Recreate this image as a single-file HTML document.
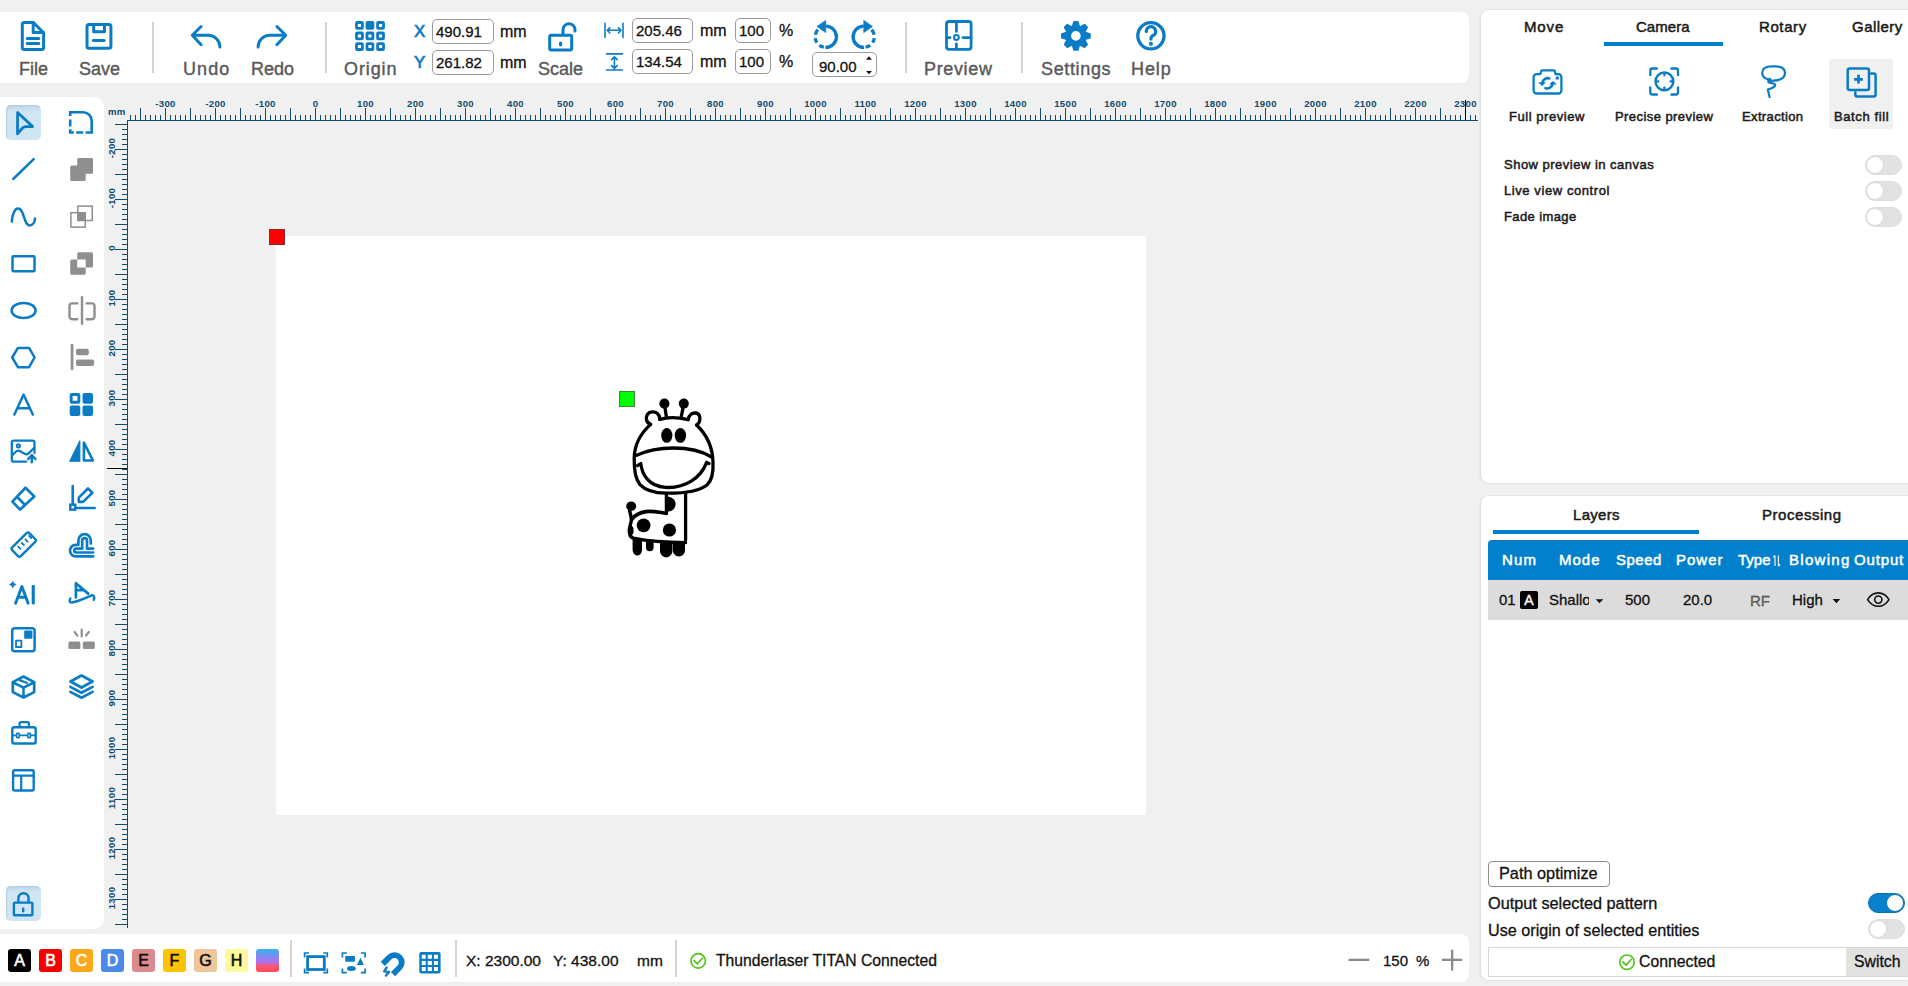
<!DOCTYPE html>
<html><head><meta charset="utf-8">
<style>
*{box-sizing:border-box;margin:0;padding:0}
html,body{width:1908px;height:986px;overflow:hidden;background:#f0f0f0;font-family:"Liberation Sans",sans-serif;position:relative}
.abs{position:absolute}
.panel{position:absolute;background:#fff}
.tb-label{position:absolute;top:60.4px;font-size:18px;color:#58585a;white-space:nowrap;line-height:1;-webkit-text-stroke:0.4px #58585a}
.sep{position:absolute;width:2px;background:#d4d4d4}
.inp{position:absolute;border:1px solid #9a9a9a;border-radius:5px;background:#fff;font-size:15px;color:#111;line-height:1;-webkit-text-stroke:0.3px #111}
.inp span{position:absolute}
.unit{position:absolute;font-size:16px;color:#111;line-height:1;-webkit-text-stroke:0.3px #111}
svg{position:absolute;overflow:visible}
.blue{fill:none;stroke:#0a7cc4}
.t13{position:absolute;font-size:13px;color:#1a1a1a;white-space:nowrap;line-height:1;-webkit-text-stroke:0.5px #1a1a1a}
.tab{position:absolute;font-size:15px;color:#1a1a1a;white-space:nowrap;line-height:1;-webkit-text-stroke:0.5px #1a1a1a}
.tog{position:absolute;width:37px;height:20px;border-radius:10px;background:#e2e2e2;border:1px solid #dedede}
.tog:after{content:"";position:absolute;left:0px;top:0px;width:18px;height:18px;box-sizing:border-box;border-radius:50%;background:#fff;border:1px solid #dadada}
.tog.on{background:#0880cc;border-color:#0a74b8}
.tog.on:after{left:auto;right:0;border-color:#0a74b8}
.hdr{position:absolute;font-size:15px;color:#fff;white-space:nowrap;line-height:1;-webkit-text-stroke:0.5px #fff}
.cell{position:absolute;font-size:15px;color:#111;white-space:nowrap;line-height:1;-webkit-text-stroke:0.3px #111}
.sw{position:absolute;top:949px;width:23px;height:23px;border-radius:3px;font-size:16px;text-align:center;line-height:24px;-webkit-text-stroke:0.6px currentColor}
</style></head><body>

<!-- top toolbar -->
<div class="panel" style="left:0;top:12px;width:1469px;height:71px;border-radius:0 8px 8px 0"></div>
<!-- left toolbar -->
<div class="panel" style="left:0;top:97px;width:104px;height:832px;border-radius:0 10px 10px 0"></div>
<div class="abs" style="left:6px;top:105px;width:35px;height:35px;border-radius:5px;background:linear-gradient(#bcd6e8,#d0e6f4 20%,#cfe5f3);box-shadow:inset 1px 1px 1px #b5ccdc"></div>
<div class="abs" style="left:6px;top:886px;width:35px;height:35px;border-radius:5px;background:linear-gradient(#bcd6e8,#d0e6f4 20%,#cfe5f3);box-shadow:inset 1px 1px 1px #b5ccdc"></div>
<!-- workspace -->
<div class="abs" style="left:276px;top:236px;width:870px;height:579px;background:#fff"></div>
<div class="abs" style="left:1478.5px;top:17px;width:3px;height:459px;background:#e7e7e7;border-radius:2px"></div>
<div class="abs" style="left:1478.5px;top:503px;width:3px;height:470px;background:#e7e7e7;border-radius:2px"></div>
<!-- right panel 1 -->
<div class="panel" style="left:1481px;top:10px;width:427px;height:473px;border-radius:8px 0 0 8px;box-shadow:-1px 0 1px #dedede,0 1px 2px #e2e2e2,0 -1px 1px #e6e6e6"></div>
<!-- right panel 2 -->
<div class="panel" style="left:1481px;top:496px;width:427px;height:484px;border-radius:8px 0 0 8px;box-shadow:-1px 0 1px #dedede,0 1px 2px #e2e2e2,0 -1px 1px #e6e6e6"></div>
<!-- bottom bar -->
<div class="panel" style="left:0;top:934px;width:1469px;height:48px;border-radius:0 8px 8px 0"></div>

<svg class="ruler" width="1908" height="986" style="position:absolute;left:0;top:0">
<path fill="#0f4b6d" d="M128 120h1350v1h-1350zM130 115h1v5h-1zM135 115h1v5h-1zM140 108h1v12h-1zM145 115h1v5h-1zM150 115h1v5h-1zM155 115h1v5h-1zM160 115h1v5h-1zM165 108h1v12h-1zM170 115h1v5h-1zM175 115h1v5h-1zM180 115h1v5h-1zM185 115h1v5h-1zM190 108h1v12h-1zM195 115h1v5h-1zM200 115h1v5h-1zM205 115h1v5h-1zM210 115h1v5h-1zM215 108h1v12h-1zM220 115h1v5h-1zM225 115h1v5h-1zM230 115h1v5h-1zM235 115h1v5h-1zM240 108h1v12h-1zM245 115h1v5h-1zM250 115h1v5h-1zM255 115h1v5h-1zM260 115h1v5h-1zM265 108h1v12h-1zM270 115h1v5h-1zM275 115h1v5h-1zM280 115h1v5h-1zM285 115h1v5h-1zM290 108h1v12h-1zM295 115h1v5h-1zM300 115h1v5h-1zM305 115h1v5h-1zM310 115h1v5h-1zM315 108h1v12h-1zM320 115h1v5h-1zM325 115h1v5h-1zM330 115h1v5h-1zM335 115h1v5h-1zM340 108h1v12h-1zM345 115h1v5h-1zM350 115h1v5h-1zM355 115h1v5h-1zM360 115h1v5h-1zM365 108h1v12h-1zM370 115h1v5h-1zM375 115h1v5h-1zM380 115h1v5h-1zM385 115h1v5h-1zM390 108h1v12h-1zM395 115h1v5h-1zM400 115h1v5h-1zM405 115h1v5h-1zM410 115h1v5h-1zM415 108h1v12h-1zM420 115h1v5h-1zM425 115h1v5h-1zM430 115h1v5h-1zM435 115h1v5h-1zM440 108h1v12h-1zM445 115h1v5h-1zM450 115h1v5h-1zM455 115h1v5h-1zM460 115h1v5h-1zM465 108h1v12h-1zM470 115h1v5h-1zM475 115h1v5h-1zM480 115h1v5h-1zM485 115h1v5h-1zM490 108h1v12h-1zM495 115h1v5h-1zM500 115h1v5h-1zM505 115h1v5h-1zM510 115h1v5h-1zM515 108h1v12h-1zM520 115h1v5h-1zM525 115h1v5h-1zM530 115h1v5h-1zM535 115h1v5h-1zM540 108h1v12h-1zM545 115h1v5h-1zM550 115h1v5h-1zM555 115h1v5h-1zM560 115h1v5h-1zM565 108h1v12h-1zM570 115h1v5h-1zM575 115h1v5h-1zM580 115h1v5h-1zM585 115h1v5h-1zM590 108h1v12h-1zM595 115h1v5h-1zM600 115h1v5h-1zM605 115h1v5h-1zM610 115h1v5h-1zM615 108h1v12h-1zM620 115h1v5h-1zM625 115h1v5h-1zM630 115h1v5h-1zM635 115h1v5h-1zM640 108h1v12h-1zM645 115h1v5h-1zM650 115h1v5h-1zM655 115h1v5h-1zM660 115h1v5h-1zM665 108h1v12h-1zM670 115h1v5h-1zM675 115h1v5h-1zM680 115h1v5h-1zM685 115h1v5h-1zM690 108h1v12h-1zM695 115h1v5h-1zM700 115h1v5h-1zM705 115h1v5h-1zM710 115h1v5h-1zM715 108h1v12h-1zM720 115h1v5h-1zM725 115h1v5h-1zM730 115h1v5h-1zM735 115h1v5h-1zM740 108h1v12h-1zM745 115h1v5h-1zM750 115h1v5h-1zM755 115h1v5h-1zM760 115h1v5h-1zM765 108h1v12h-1zM770 115h1v5h-1zM775 115h1v5h-1zM780 115h1v5h-1zM785 115h1v5h-1zM790 108h1v12h-1zM795 115h1v5h-1zM800 115h1v5h-1zM805 115h1v5h-1zM810 115h1v5h-1zM815 108h1v12h-1zM820 115h1v5h-1zM825 115h1v5h-1zM830 115h1v5h-1zM835 115h1v5h-1zM840 108h1v12h-1zM845 115h1v5h-1zM850 115h1v5h-1zM855 115h1v5h-1zM860 115h1v5h-1zM865 108h1v12h-1zM870 115h1v5h-1zM875 115h1v5h-1zM880 115h1v5h-1zM885 115h1v5h-1zM890 108h1v12h-1zM895 115h1v5h-1zM900 115h1v5h-1zM905 115h1v5h-1zM910 115h1v5h-1zM915 108h1v12h-1zM920 115h1v5h-1zM925 115h1v5h-1zM930 115h1v5h-1zM935 115h1v5h-1zM940 108h1v12h-1zM945 115h1v5h-1zM950 115h1v5h-1zM955 115h1v5h-1zM960 115h1v5h-1zM965 108h1v12h-1zM970 115h1v5h-1zM975 115h1v5h-1zM980 115h1v5h-1zM985 115h1v5h-1zM990 108h1v12h-1zM995 115h1v5h-1zM1000 115h1v5h-1zM1005 115h1v5h-1zM1010 115h1v5h-1zM1015 108h1v12h-1zM1020 115h1v5h-1zM1025 115h1v5h-1zM1030 115h1v5h-1zM1035 115h1v5h-1zM1040 108h1v12h-1zM1045 115h1v5h-1zM1050 115h1v5h-1zM1055 115h1v5h-1zM1060 115h1v5h-1zM1065 108h1v12h-1zM1070 115h1v5h-1zM1075 115h1v5h-1zM1080 115h1v5h-1zM1085 115h1v5h-1zM1090 108h1v12h-1zM1095 115h1v5h-1zM1100 115h1v5h-1zM1105 115h1v5h-1zM1110 115h1v5h-1zM1115 108h1v12h-1zM1120 115h1v5h-1zM1125 115h1v5h-1zM1130 115h1v5h-1zM1135 115h1v5h-1zM1140 108h1v12h-1zM1145 115h1v5h-1zM1150 115h1v5h-1zM1155 115h1v5h-1zM1160 115h1v5h-1zM1165 108h1v12h-1zM1170 115h1v5h-1zM1175 115h1v5h-1zM1180 115h1v5h-1zM1185 115h1v5h-1zM1190 108h1v12h-1zM1195 115h1v5h-1zM1200 115h1v5h-1zM1205 115h1v5h-1zM1210 115h1v5h-1zM1215 108h1v12h-1zM1220 115h1v5h-1zM1225 115h1v5h-1zM1230 115h1v5h-1zM1235 115h1v5h-1zM1240 108h1v12h-1zM1245 115h1v5h-1zM1250 115h1v5h-1zM1255 115h1v5h-1zM1260 115h1v5h-1zM1265 108h1v12h-1zM1270 115h1v5h-1zM1275 115h1v5h-1zM1280 115h1v5h-1zM1285 115h1v5h-1zM1290 108h1v12h-1zM1295 115h1v5h-1zM1300 115h1v5h-1zM1305 115h1v5h-1zM1310 115h1v5h-1zM1315 108h1v12h-1zM1320 115h1v5h-1zM1325 115h1v5h-1zM1330 115h1v5h-1zM1335 115h1v5h-1zM1340 108h1v12h-1zM1345 115h1v5h-1zM1350 115h1v5h-1zM1355 115h1v5h-1zM1360 115h1v5h-1zM1365 108h1v12h-1zM1370 115h1v5h-1zM1375 115h1v5h-1zM1380 115h1v5h-1zM1385 115h1v5h-1zM1390 108h1v12h-1zM1395 115h1v5h-1zM1400 115h1v5h-1zM1405 115h1v5h-1zM1410 115h1v5h-1zM1415 108h1v12h-1zM1420 115h1v5h-1zM1425 115h1v5h-1zM1430 115h1v5h-1zM1435 115h1v5h-1zM1440 108h1v12h-1zM1445 115h1v5h-1zM1450 115h1v5h-1zM1455 115h1v5h-1zM1460 115h1v5h-1zM1465 108h1v12h-1zM1470 115h1v5h-1zM1475 115h1v5h-1zM127 120h1v808h-1zM115 124h12v1h-12zM122 129h5v1h-5zM122 134h5v1h-5zM122 139h5v1h-5zM122 144h5v1h-5zM115 149h12v1h-12zM122 154h5v1h-5zM122 159h5v1h-5zM122 164h5v1h-5zM122 169h5v1h-5zM115 174h12v1h-12zM122 179h5v1h-5zM122 184h5v1h-5zM122 189h5v1h-5zM122 194h5v1h-5zM115 199h12v1h-12zM122 204h5v1h-5zM122 209h5v1h-5zM122 214h5v1h-5zM122 219h5v1h-5zM115 224h12v1h-12zM122 229h5v1h-5zM122 234h5v1h-5zM122 239h5v1h-5zM122 244h5v1h-5zM115 249h12v1h-12zM122 254h5v1h-5zM122 259h5v1h-5zM122 264h5v1h-5zM122 269h5v1h-5zM115 274h12v1h-12zM122 279h5v1h-5zM122 284h5v1h-5zM122 289h5v1h-5zM122 294h5v1h-5zM115 299h12v1h-12zM122 304h5v1h-5zM122 309h5v1h-5zM122 314h5v1h-5zM122 319h5v1h-5zM115 324h12v1h-12zM122 329h5v1h-5zM122 334h5v1h-5zM122 339h5v1h-5zM122 344h5v1h-5zM115 349h12v1h-12zM122 354h5v1h-5zM122 359h5v1h-5zM122 364h5v1h-5zM122 369h5v1h-5zM115 374h12v1h-12zM122 379h5v1h-5zM122 384h5v1h-5zM122 389h5v1h-5zM122 394h5v1h-5zM115 399h12v1h-12zM122 404h5v1h-5zM122 409h5v1h-5zM122 414h5v1h-5zM122 419h5v1h-5zM115 424h12v1h-12zM122 429h5v1h-5zM122 434h5v1h-5zM122 439h5v1h-5zM122 444h5v1h-5zM115 449h12v1h-12zM122 454h5v1h-5zM122 459h5v1h-5zM122 464h5v1h-5zM122 469h5v1h-5zM115 474h12v1h-12zM122 479h5v1h-5zM122 484h5v1h-5zM122 489h5v1h-5zM122 494h5v1h-5zM115 499h12v1h-12zM122 504h5v1h-5zM122 509h5v1h-5zM122 514h5v1h-5zM122 519h5v1h-5zM115 524h12v1h-12zM122 529h5v1h-5zM122 534h5v1h-5zM122 539h5v1h-5zM122 544h5v1h-5zM115 549h12v1h-12zM122 554h5v1h-5zM122 559h5v1h-5zM122 564h5v1h-5zM122 569h5v1h-5zM115 574h12v1h-12zM122 579h5v1h-5zM122 584h5v1h-5zM122 589h5v1h-5zM122 594h5v1h-5zM115 599h12v1h-12zM122 604h5v1h-5zM122 609h5v1h-5zM122 614h5v1h-5zM122 619h5v1h-5zM115 624h12v1h-12zM122 629h5v1h-5zM122 634h5v1h-5zM122 639h5v1h-5zM122 644h5v1h-5zM115 649h12v1h-12zM122 654h5v1h-5zM122 659h5v1h-5zM122 664h5v1h-5zM122 669h5v1h-5zM115 674h12v1h-12zM122 679h5v1h-5zM122 684h5v1h-5zM122 689h5v1h-5zM122 694h5v1h-5zM115 699h12v1h-12zM122 704h5v1h-5zM122 709h5v1h-5zM122 714h5v1h-5zM122 719h5v1h-5zM115 724h12v1h-12zM122 729h5v1h-5zM122 734h5v1h-5zM122 739h5v1h-5zM122 744h5v1h-5zM115 749h12v1h-12zM122 754h5v1h-5zM122 759h5v1h-5zM122 764h5v1h-5zM122 769h5v1h-5zM115 774h12v1h-12zM122 779h5v1h-5zM122 784h5v1h-5zM122 789h5v1h-5zM122 794h5v1h-5zM115 799h12v1h-12zM122 804h5v1h-5zM122 809h5v1h-5zM122 814h5v1h-5zM122 819h5v1h-5zM115 824h12v1h-12zM122 829h5v1h-5zM122 834h5v1h-5zM122 839h5v1h-5zM122 844h5v1h-5zM115 849h12v1h-12zM122 854h5v1h-5zM122 859h5v1h-5zM122 864h5v1h-5zM122 869h5v1h-5zM115 874h12v1h-12zM122 879h5v1h-5zM122 884h5v1h-5zM122 889h5v1h-5zM122 894h5v1h-5zM115 899h12v1h-12zM122 904h5v1h-5zM122 909h5v1h-5zM122 914h5v1h-5zM122 919h5v1h-5zM115 924h12v1h-12z"/>
<g fill="#0f4b6d" font-family="Liberation Sans" font-weight="bold" font-size="9.6" letter-spacing="0.3"><text x="165.5" y="107" text-anchor="middle">-300</text><text x="215.5" y="107" text-anchor="middle">-200</text><text x="265.5" y="107" text-anchor="middle">-100</text><text x="315.5" y="107" text-anchor="middle">0</text><text x="365.5" y="107" text-anchor="middle">100</text><text x="415.5" y="107" text-anchor="middle">200</text><text x="465.5" y="107" text-anchor="middle">300</text><text x="515.5" y="107" text-anchor="middle">400</text><text x="565.5" y="107" text-anchor="middle">500</text><text x="615.5" y="107" text-anchor="middle">600</text><text x="665.5" y="107" text-anchor="middle">700</text><text x="715.5" y="107" text-anchor="middle">800</text><text x="765.5" y="107" text-anchor="middle">900</text><text x="815.5" y="107" text-anchor="middle">1000</text><text x="865.5" y="107" text-anchor="middle">1100</text><text x="915.5" y="107" text-anchor="middle">1200</text><text x="965.5" y="107" text-anchor="middle">1300</text><text x="1015.5" y="107" text-anchor="middle">1400</text><text x="1065.5" y="107" text-anchor="middle">1500</text><text x="1115.5" y="107" text-anchor="middle">1600</text><text x="1165.5" y="107" text-anchor="middle">1700</text><text x="1215.5" y="107" text-anchor="middle">1800</text><text x="1265.5" y="107" text-anchor="middle">1900</text><text x="1315.5" y="107" text-anchor="middle">2000</text><text x="1365.5" y="107" text-anchor="middle">2100</text><text x="1415.5" y="107" text-anchor="middle">2200</text><text x="1465.5" y="107" text-anchor="middle">2300</text><text transform="translate(114.5 148.0) rotate(-90)" text-anchor="middle">-200</text><text transform="translate(114.5 198.0) rotate(-90)" text-anchor="middle">-100</text><text transform="translate(114.5 248.0) rotate(-90)" text-anchor="middle">0</text><text transform="translate(114.5 298.0) rotate(-90)" text-anchor="middle">100</text><text transform="translate(114.5 348.0) rotate(-90)" text-anchor="middle">200</text><text transform="translate(114.5 398.0) rotate(-90)" text-anchor="middle">300</text><text transform="translate(114.5 448.0) rotate(-90)" text-anchor="middle">400</text><text transform="translate(114.5 498.0) rotate(-90)" text-anchor="middle">500</text><text transform="translate(114.5 548.0) rotate(-90)" text-anchor="middle">600</text><text transform="translate(114.5 598.0) rotate(-90)" text-anchor="middle">700</text><text transform="translate(114.5 648.0) rotate(-90)" text-anchor="middle">800</text><text transform="translate(114.5 698.0) rotate(-90)" text-anchor="middle">900</text><text transform="translate(114.5 748.0) rotate(-90)" text-anchor="middle">1000</text><text transform="translate(114.5 798.0) rotate(-90)" text-anchor="middle">1100</text><text transform="translate(114.5 848.0) rotate(-90)" text-anchor="middle">1200</text><text transform="translate(114.5 898.0) rotate(-90)" text-anchor="middle">1300</text>
<text x="108" y="115">mm</text></g>
<path fill="#000" d="M1465 100h1v20h-1zM107 468h20v1h-20z"/>
</svg>

<!-- toolbar labels -->
<div class="tb-label" style="left:19px">File</div>
<div class="tb-label" style="left:79px">Save</div>
<div class="sep" style="left:152px;top:22px;height:51px"></div>
<div class="tb-label" style="left:183px;letter-spacing:1.1px">Undo</div>
<div class="tb-label" style="left:251px">Redo</div>
<div class="sep" style="left:325px;top:22px;height:51px"></div>
<div class="tb-label" style="left:344px;letter-spacing:0.9px">Origin</div>
<div class="tb-label" style="left:538px">Scale</div>
<div class="sep" style="left:905px;top:22px;height:51px"></div>
<div class="tb-label" style="left:924px;letter-spacing:0.65px">Preview</div>
<div class="sep" style="left:1021px;top:22px;height:51px"></div>
<div class="tb-label" style="left:1041px;letter-spacing:0.65px">Settings</div>
<div class="tb-label" style="left:1131px;letter-spacing:0.9px">Help</div>

<!-- inputs -->
<div class="abs" style="left:414px;top:23px;font-size:17px;color:#0a7cc6;line-height:1;-webkit-text-stroke:0.7px #0a7cc6">X</div>
<div class="abs" style="left:414px;top:54px;font-size:17px;color:#0a7cc6;line-height:1;-webkit-text-stroke:0.7px #0a7cc6">Y</div>
<div class="inp" style="left:432px;top:19px;width:62px;height:25px"><span style="left:3px;top:4px">490.91</span></div>
<div class="inp" style="left:432px;top:50px;width:62px;height:25px"><span style="left:3px;top:4px">261.82</span></div>
<div class="unit" style="left:500px;top:24px">mm</div>
<div class="unit" style="left:500px;top:55px">mm</div>

<div class="inp" style="left:632px;top:18px;width:61px;height:25px"><span style="left:3px;top:4px">205.46</span></div>
<div class="inp" style="left:632px;top:49px;width:61px;height:25px"><span style="left:3px;top:4px">134.54</span></div>
<div class="unit" style="left:700px;top:23px">mm</div>
<div class="unit" style="left:700px;top:54px">mm</div>
<div class="inp" style="left:735px;top:18px;width:36px;height:25px"><span style="left:3px;top:4px">100</span></div>
<div class="inp" style="left:735px;top:49px;width:36px;height:25px"><span style="left:3px;top:4px">100</span></div>
<div class="unit" style="left:779px;top:23px">%</div>
<div class="unit" style="left:779px;top:54px">%</div>
<div class="inp" style="left:812px;top:52px;width:65px;height:25px"><span style="left:6px;top:6px">90.00</span></div>

<!-- right panel tabs -->
<div class="tab" style="left:1524px;top:19px;letter-spacing:0.87px">Move</div>
<div class="tab" style="left:1636px;top:19px;letter-spacing:0.04px">Camera</div>
<div class="tab" style="left:1759px;top:19px;letter-spacing:0.6px">Rotary</div>
<div class="tab" style="left:1852px;top:19px;letter-spacing:0.47px">Gallery</div>
<div class="abs" style="left:1604px;top:42px;width:119px;height:4px;background:#0580cc"></div>

<div class="abs" style="left:1829px;top:59px;width:64px;height:70px;background:#f0f0f0;border-radius:3px"></div>
<div class="t13" style="left:1509px;top:110px;letter-spacing:0.55px">Full preview</div>
<div class="t13" style="left:1615px;top:110px;letter-spacing:0.43px">Precise preview</div>
<div class="t13" style="left:1742px;top:110px;letter-spacing:0.36px">Extraction</div>
<div class="t13" style="left:1834px;top:110px;letter-spacing:0.6px">Batch fill</div>

<div class="t13" style="left:1504px;top:158px;letter-spacing:0.49px">Show preview in canvas</div>
<div class="t13" style="left:1504px;top:184px;letter-spacing:0.58px">Live view control</div>
<div class="t13" style="left:1504px;top:210px;letter-spacing:0.39px">Fade image</div>
<div class="tog" style="left:1865px;top:155px"></div>
<div class="tog" style="left:1865px;top:181px"></div>
<div class="tog" style="left:1865px;top:207px"></div>

<!-- layers panel -->
<div class="tab" style="left:1573px;top:507px;letter-spacing:0.3px">Layers</div>
<div class="tab" style="left:1762px;top:507px;letter-spacing:0.54px">Processing</div>
<div class="abs" style="left:1493px;top:530px;width:206px;height:4px;background:#0580cc"></div>
<div class="abs" style="left:1488px;top:540px;width:420px;height:40px;background:#0380cc;border-radius:4px 0 0 0;border-top:1px solid #2577ad"></div>
<div class="hdr" style="left:1502px;top:552px;letter-spacing:1.2px">Num</div>
<div class="hdr" style="left:1559px;top:552px;letter-spacing:1.0px">Mode</div>
<div class="hdr" style="left:1616px;top:552px;letter-spacing:0.5px">Speed</div>
<div class="hdr" style="left:1676px;top:552px;letter-spacing:1.0px">Power</div>
<div class="hdr" style="left:1738px;top:552px">Type</div>
<div class="hdr" style="left:1789px;top:552px;letter-spacing:1.3px">Blowing</div>
<div class="hdr" style="left:1854px;top:552px;letter-spacing:0.85px">Output</div>
<div class="abs" style="left:1488px;top:580px;width:420px;height:40px;background:#dcdcdc"></div>
<div class="cell" style="left:1499px;top:592px">01</div>
<div class="abs" style="left:1520px;top:591px;width:18px;height:18px;border-radius:2px;background:#000;color:#fff;font-size:14px;text-align:center;line-height:18px;-webkit-text-stroke:0.4px #fff">A</div>
<div class="cell" style="left:1549px;top:592px;width:40px;overflow:hidden">Shallow</div>
<div class="cell" style="left:1625px;top:592px">500</div>
<div class="cell" style="left:1683px;top:592px">20.0</div>
<div class="cell" style="left:1750px;top:593px;color:#777">RF</div>
<div class="cell" style="left:1792px;top:592px">High</div>

<div class="abs" style="left:1488px;top:861px;width:122px;height:26px;border:1px solid #8e8e8e;border-radius:4px;background:#fff"></div>
<div class="cell" style="left:1499px;top:865px;font-size:16.3px">Path optimize</div>
<div class="cell" style="left:1488px;top:895px;font-size:16.3px">Output selected pattern</div>
<div class="cell" style="left:1488px;top:922px;font-size:16.2px">Use origin of selected entities</div>
<div class="tog on" style="left:1868px;top:893px"></div>
<div class="tog" style="left:1868px;top:919px"></div>
<div class="abs" style="left:1488px;top:947px;width:420px;height:30px;border:1px solid #d6d6d6;background:#fff"></div>
<div class="abs" style="left:1846px;top:948px;width:62px;height:28px;background:#e2e2e2"></div>
<div class="cell" style="left:1639px;top:954px;font-size:15.8px">Connected</div>
<div class="cell" style="left:1854px;top:954px;font-size:15.8px">Switch</div>

<!-- bottom bar -->
<div class="sw" style="left:8px;background:#000;color:#fff">A</div>
<div class="sw" style="left:39px;background:#f60000;color:#fff">B</div>
<div class="sw" style="left:70px;background:#fba81a;color:#fff">C</div>
<div class="sw" style="left:101px;background:#4a8ae8;color:#fff">D</div>
<div class="sw" style="left:132px;background:#dd8a8f;color:#111">E</div>
<div class="sw" style="left:163px;background:#fcc400;color:#111">F</div>
<div class="sw" style="left:194px;background:#efc69a;color:#111">G</div>
<div class="sw" style="left:225px;background:#fdfa9c;color:#111">H</div>
<div class="sw" style="left:256px;background:linear-gradient(#30b4f2 0%,#7d8eee 30%,#b06ef0 58%,#f65a78 72%,#ff4b55 100%)"></div>
<div class="sep" style="left:290px;top:940px;height:37px"></div>
<div class="sep" style="left:455px;top:940px;height:37px"></div>
<div class="cell" style="left:466px;top:953px;font-size:15.5px">X: 2300.00</div>
<div class="cell" style="left:553px;top:953px;font-size:15.5px">Y: 438.00</div>
<div class="cell" style="left:637px;top:953px;font-size:15.5px">mm</div>
<div class="sep" style="left:675px;top:940px;height:37px"></div>
<div class="cell" style="left:716px;top:953px;font-size:15.7px">Thunderlaser TITAN Connected</div>
<div class="cell" style="left:1383px;top:953px">150</div>
<div class="cell" style="left:1416px;top:953px">%</div>

<!-- canvas objects -->
<div class="abs" style="left:269px;top:229px;width:16px;height:16px;background:#f00;border:1px solid #8a2a2a"></div>
<div class="abs" style="left:619px;top:391px;width:16px;height:16px;background:#0f0;border:1px solid #3a8a3a"></div>

<svg width="1908" height="986" style="left:0;top:0">
<g fill="none" stroke="#0a7cc6" stroke-width="3" stroke-linecap="round" stroke-linejoin="round">
<!-- File -->
<path d="M24.3 22.4H33.2L43.6 32.8V47.6a2 2 0 0 1 -2 2H24.3a2 2 0 0 1 -2 -2V24.4a2 2 0 0 1 2 -2z"/>
<path d="M33.2 22.6V32.6H43.4"/>
<path d="M27.2 38.6H38.8M27.2 43.6H38.8"/>
<!-- Save -->
<rect x="87" y="24.5" width="23.9" height="23.8" rx="2"/>
<path d="M93.7 24.6V31.8H104.5V24.6"/>
<path d="M93.3 40.4H104.2"/>
<!-- Undo -->
<path d="M201.1 26.5L192.3 35.3L201.1 44.7M192.6 35.3H208.3A11.6 11.6 0 0 1 219.9 46.9"/>
<path transform="translate(478 0) scale(-1 1)" d="M201.1 26.5L192.3 35.3L201.1 44.7M192.6 35.3H208.3A11.6 11.6 0 0 1 219.9 46.9"/>
</g>
<!-- Origin grid -->
<g fill="#0a7cc6">
<path fill-rule="evenodd" d="M357.10 21.10h4.70a2.0 2.0 0 0 1 2.0 2.0v4.70a2.0 2.0 0 0 1 -2.0 2.0h-4.70a2.0 2.0 0 0 1 -2.0 -2.0v-4.70a2.0 2.0 0 0 1 2.0 -2.0zM357.90 23.90v3.1h3.1v-3.1z"/>
<path fill-rule="evenodd" d="M367.60 21.10h4.70a2.0 2.0 0 0 1 2.0 2.0v4.70a2.0 2.0 0 0 1 -2.0 2.0h-4.70a2.0 2.0 0 0 1 -2.0 -2.0v-4.70a2.0 2.0 0 0 1 2.0 -2.0z"/>
<path fill-rule="evenodd" d="M378.20 21.10h4.70a2.0 2.0 0 0 1 2.0 2.0v4.70a2.0 2.0 0 0 1 -2.0 2.0h-4.70a2.0 2.0 0 0 1 -2.0 -2.0v-4.70a2.0 2.0 0 0 1 2.0 -2.0zM379.00 23.90v3.1h3.1v-3.1z"/>
<path fill-rule="evenodd" d="M357.10 31.60h4.70a2.0 2.0 0 0 1 2.0 2.0v4.70a2.0 2.0 0 0 1 -2.0 2.0h-4.70a2.0 2.0 0 0 1 -2.0 -2.0v-4.70a2.0 2.0 0 0 1 2.0 -2.0zM357.90 34.40v3.1h3.1v-3.1z"/>
<path fill-rule="evenodd" d="M367.60 31.60h4.70a2.0 2.0 0 0 1 2.0 2.0v4.70a2.0 2.0 0 0 1 -2.0 2.0h-4.70a2.0 2.0 0 0 1 -2.0 -2.0v-4.70a2.0 2.0 0 0 1 2.0 -2.0zM368.40 34.40v3.1h3.1v-3.1z"/>
<path fill-rule="evenodd" d="M378.20 31.60h4.70a2.0 2.0 0 0 1 2.0 2.0v4.70a2.0 2.0 0 0 1 -2.0 2.0h-4.70a2.0 2.0 0 0 1 -2.0 -2.0v-4.70a2.0 2.0 0 0 1 2.0 -2.0zM379.00 34.40v3.1h3.1v-3.1z"/>
<path fill-rule="evenodd" d="M357.10 42.20h4.70a2.0 2.0 0 0 1 2.0 2.0v4.70a2.0 2.0 0 0 1 -2.0 2.0h-4.70a2.0 2.0 0 0 1 -2.0 -2.0v-4.70a2.0 2.0 0 0 1 2.0 -2.0zM357.90 45.00v3.1h3.1v-3.1z"/>
<path fill-rule="evenodd" d="M367.60 42.20h4.70a2.0 2.0 0 0 1 2.0 2.0v4.70a2.0 2.0 0 0 1 -2.0 2.0h-4.70a2.0 2.0 0 0 1 -2.0 -2.0v-4.70a2.0 2.0 0 0 1 2.0 -2.0zM368.40 45.00v3.1h3.1v-3.1z"/>
<path fill-rule="evenodd" d="M378.20 42.20h4.70a2.0 2.0 0 0 1 2.0 2.0v4.70a2.0 2.0 0 0 1 -2.0 2.0h-4.70a2.0 2.0 0 0 1 -2.0 -2.0v-4.70a2.0 2.0 0 0 1 2.0 -2.0zM379.00 45.00v3.1h3.1v-3.1z"/>
</g>
<!-- Lock open -->
<g fill="none" stroke="#0a7cc6" stroke-width="3">
<rect x="549.7" y="35.2" width="22" height="14.9" rx="1.5"/>
<path d="M563 35V29.7A6 6 0 0 1 575 29.7V31" stroke-linecap="round"/>
</g>
<rect x="559" y="41.6" width="3.2" height="4.8" rx="1.6" fill="#0a7cc6"/>
<!-- width/height icons -->
<g fill="none" stroke="#0a7cc6" stroke-width="1.6" stroke-linecap="round" stroke-linejoin="round">
<path d="M605 23.3V37.4M623 23.3V37.4M607.6 30.3H620.6M609.8 27.8L607.2 30.3L609.8 33M618.4 27.8L621 30.3L618.4 33"/>
<path d="M606.5 53.9H622.5M606.5 70H622.5M614.4 57V68M611.6 59.6L614.4 56.8L617.2 59.6M611.6 65.6L614.4 68.4L617.2 65.6"/>
</g>
<!-- rotate ccw / cw -->
<g id="rot">
<path d="M825.75 26.20A10.6 10.6 0 1 1 825.38 47.39" fill="none" stroke="#0a7cc6" stroke-width="3.3"/>
<path d="M823.91 47.24A10.6 10.6 0 0 1 819.37 45.27M816.86 42.57A10.6 10.6 0 0 1 815.23 38.09M815.34 34.78A10.6 10.6 0 0 1 817.87 29.71" fill="none" stroke="#0a7cc6" stroke-width="3.3"/>
<path d="M825.8 20.2L816.9 26.4L825.8 32.8z" fill="#0a7cc6" stroke="#0a7cc6" stroke-width="0.5" stroke-linejoin="round"/>
</g>
<use href="#rot" transform="translate(1689.5 0) scale(-1 1)"/>
<!-- Preview -->
<g fill="none" stroke="#0a7cc6" stroke-width="2.8">
<rect x="946.5" y="21.5" width="24.6" height="27.8" rx="2.5"/>
<path d="M956.4 21.5V31.4M956.4 44V49.3M946.5 37.6H950.1M962.9 37.6H971.1" stroke-linecap="round"/>
<circle cx="956.4" cy="37.5" r="2.4" stroke-width="2"/>
</g>
<!-- Gear -->
<g fill="#0a7cc6">
<path fill-rule="evenodd" id="gear" stroke="#0a7cc6" stroke-width="1.6" stroke-linejoin="round" d="M1072.57 26.47L1074.01 21.83L1077.79 21.83L1079.23 26.47L1080.21 26.88L1084.51 24.61L1087.19 27.29L1084.92 31.59L1085.33 32.57L1089.97 34.01L1089.97 37.79L1085.33 39.23L1084.92 40.21L1087.19 44.51L1084.51 47.19L1080.21 44.92L1079.23 45.33L1077.79 49.97L1074.01 49.97L1072.57 45.33L1071.59 44.92L1067.29 47.19L1064.61 44.51L1066.88 40.21L1066.47 39.23L1061.83 37.79L1061.83 34.01L1066.47 32.57L1066.88 31.59L1064.61 27.29L1067.29 24.61L1071.59 26.88ZM1070.3000000000002 35.9a5.6 5.6 0 1 0 11.2 0a5.6 5.6 0 1 0 -11.2 0z"/>
</g>
<!-- Help -->
<g fill="none" stroke="#0a7cc6" stroke-width="3.3" stroke-linecap="round">
<circle cx="1150.9" cy="35.8" r="13.1"/>
<path d="M1146.3 31.4A4.7 4.7 0 1 1 1152.6 35.8C1151.4 36.5 1150.9 37.5 1150.9 39"/>
</g>
<circle cx="1150.9" cy="43.8" r="2.1" fill="#0a7cc6"/>
</svg>
<svg width="1908" height="986" style="left:0;top:0">
<g fill="none" stroke="#0a7cc6" stroke-width="2.3" stroke-linejoin="round" stroke-linecap="round">
<!-- camera -->
<path d="M1533.6 77.2a3 3 0 0 1 3 -3H1540.2L1541 71.8a1.5 1.5 0 0 1 1.5 -1.4H1553.5a1.5 1.5 0 0 1 1.5 1.4L1555.6 74.2H1558.4a3 3 0 0 1 3 3V90.5a3 3 0 0 1 -3 3H1536.6a3 3 0 0 1 -3 -3Z"/>
<path d="M1549.3 78.4C1546.5 77.6 1543 79 1542.3 83" stroke-width="2.6"/>
<path d="M1545.5 88.2C1548.5 89 1552 87.6 1552.7 83.8" stroke-width="2.6"/>
<!-- precise preview -->
<path d="M1650.3 76V70.5a2 2 0 0 1 2 -2H1657.8M1670.5 68.5H1676a2 2 0 0 1 2 2V76M1678 86.6V92.5a2 2 0 0 1 -2 2H1670.5M1657.8 94.5H1652.3a2 2 0 0 1 -2 -2V86.6" stroke-width="2.3" stroke-linecap="butt"/>
<circle cx="1664.4" cy="81.4" r="8.9" stroke-width="2.4"/>
<path d="M1664.4 72.5V76.2M1664.4 86.6V90.3M1655.5 81.4H1659.2M1669.6 81.4H1673.3" stroke-width="2.2" stroke-linecap="butt"/>
<!-- extraction lasso -->
<path d="M1769.2 79.6C1763.5 78.6 1762.2 75 1762.2 72.8C1762.2 68 1766 66.4 1772 66.4H1775.5C1781.5 66.4 1785 68.5 1785 73C1785 77.6 1781 80.2 1774 80.6C1771.8 80.7 1770.4 80.6 1769.4 80.4C1769.2 79.4 1769.6 78.8 1770 78.8C1768 80 1767.6 82 1769.4 82.6C1771 83 1773.8 82.6 1775 84.5C1775.8 86 1773.5 87.4 1771 88.4L1767.8 89.6L1769.6 97" stroke-width="2.2"/>
<!-- batch fill -->
<path d="M1871.2 73.6H1873.6a2 2 0 0 1 2 2V94.6a2 2 0 0 1 -2 2H1857.3a2 2 0 0 1 -2 -2V92.2" stroke-width="2.5"/>
<rect x="1847.7" y="68.5" width="21.3" height="21.4" rx="2" stroke-width="2.5"/>
<path d="M1858.5 74.8V83.6M1854.1 79.3H1862.9" stroke-width="2.8" stroke-linecap="butt"/>
</g>
<g fill="#0a7cc6">
<circle cx="1557.3" cy="78" r="1.7"/>
<path d="M1538.1 82.2H1546L1542.1 86z"/>
<path d="M1549.2 84.6H1557L1552.8 80.9z"/>
</g>
</svg>
<svg width="1908" height="986" style="left:0;top:0">
<g fill="none" stroke="#0a7cc6" stroke-width="2.6" stroke-linecap="round" stroke-linejoin="round">
<!-- select arrow -->
<path d="M17.6 112.6L17.5 133.8L22.8 127.8C23.6 127 24.6 126.6 25.8 126.6H32.6Z" stroke-width="2.8"/>
<!-- rect select dashed -->
<path d="M70.2 116V112.2H83A8.7 8.7 0 0 1 91.7 120.9V132.5H85.6M83.3 132.5H76.2M73.9 132.5H70.2V129.2M70.2 126.4V119.6" stroke-linecap="butt" stroke-linejoin="miter"/>
<!-- line -->
<path d="M13.2 179L33.7 159.2" stroke-width="2.5"/>
<!-- curve -->
<path d="M11.8 221.6C12.2 214 15 208.6 18 208.6C24.6 208.6 23.6 225.4 29.6 225.4C32.4 225.4 34.6 222.4 35 218.6" stroke-width="2.5"/>
<!-- rect -->
<rect x="12.5" y="256.2" width="22" height="15" rx="1" stroke-width="2.5"/>
<!-- ellipse -->
<ellipse cx="23.6" cy="310.5" rx="12" ry="7.6" stroke-width="2.5"/>
<!-- hexagon -->
<path d="M12.2 357.5L17.9 347.9H29.1L34.6 357.5L29.1 367.2H17.9Z" stroke-width="2.5"/>
<!-- A -->
<path d="M14.4 414.6L23.6 394.6L32.8 414.6M17.9 408.2H29.3" stroke-width="2.5"/>
<!-- image -->
<path d="M26.2 461.7H13.8a2 2 0 0 1 -2 -2V442.6a2 2 0 0 1 2 -2H32.5a2 2 0 0 1 2 2V453" stroke-width="2.3"/>
<path d="M12.6 454.8L15.6 452C17 450.6 18.6 450.2 20.2 451.2L24.6 453.8C26 454.6 27.4 454.4 28.6 453.4L34 448" stroke-width="2.3"/>
<circle cx="18.4" cy="445.8" r="1.6" stroke-width="2"/>
<path d="M31.8 462.2V455.4M28.2 459L31.8 455.2L35.4 459" stroke-width="2.5"/>
<!-- eraser -->
<path d="M25.5 487.8L34.2 496.4L20.1 509.6L12.4 501.6Z" stroke-width="2.7"/>
<path d="M17.2 497L24.4 504.4" stroke-width="2.7"/>
<!-- ruler -->
<path d="M12.2 547.4L26.6 533.2a2 2 0 0 1 2.8 0L35.2 539a2 2 0 0 1 0 2.8L20.8 556.2a2 2 0 0 1 -2.8 0L12.2 550.2a2 2 0 0 1 0 -2.8Z" stroke-width="2.4"/>
<path d="M18.2 546.6L20.4 548.8M21.8 543L24 545.2M25.4 539.4L27.6 541.6M29 535.8L31.2 538" stroke-width="1.8"/>
<!-- AI A -->
<path d="M15.6 603.2L21.9 586.6L28.1 603.2M17.9 597.3H25.9" stroke-width="2.9"/>
<!-- matrix -->
<rect x="12.2" y="628.3" width="22.4" height="22.9" rx="2.5" stroke-width="2.5"/>
<rect x="16" y="640.7" width="5.4" height="6.3" stroke-width="1.8"/>
<!-- cube -->
<path d="M23.5 676.5L34.2 682.1V692.1L23.5 697.5L12.8 692.1V682.1Z" stroke-width="2.7"/>
<path d="M13.2 682.5L23.5 687.7L33.8 682.5M23.5 687.7V697" stroke-width="2.6"/>
<path d="M19 679.9L27.8 683.2" stroke-width="2.2" stroke-linecap="butt"/>
<!-- toolbox -->
<rect x="12.3" y="727.2" width="23.4" height="16.3" rx="2" stroke-width="2.4"/>
<path d="M19.6 727V723.6a1.5 1.5 0 0 1 1.5 -1.5H27.4a1.5 1.5 0 0 1 1.5 1.5V727" stroke-width="2.2"/>
<path d="M12.6 735.4H35.4" stroke-width="1.8"/>
<rect x="16.6" y="733.4" width="2.6" height="4.2" rx="0.6" stroke-width="1.6" fill="#fff"/>
<rect x="27.8" y="733.4" width="2.6" height="4.2" rx="0.6" stroke-width="1.6" fill="#fff"/>
<!-- layout -->
<rect x="13.1" y="770.2" width="20.6" height="20.3" rx="1.5" stroke-width="2.4"/>
<path d="M13.4 775.6H33.4M21.2 775.8V790.2" stroke-width="2.2"/>
<!-- measure -->
<path d="M72.75 486V504M76 508H94.6" stroke-width="2.7"/>
<rect x="70.3" y="504.7" width="4.9" height="4.9" stroke-width="2.5" stroke-linecap="butt" stroke-linejoin="miter"/>
<path d="M88 488.5L92.4 492.8L83.1 501.9H78.8V497.6Z" stroke-width="2.6"/>
<!-- heart lineart -->
<path d="M93.2 556.4H75.8A5.8 5.8 0 0 1 75.8 544.8H78.4V540.4A6.2 6.2 0 0 1 90.8 540.4V543.6" stroke-width="2.7" stroke-linecap="round"/>
<path d="M93.2 552.5H76.2A1.9 1.9 0 0 1 76.2 548.7H82.2V540.6A2.4 2.4 0 0 1 87 540.6V548.6H93.2" stroke-width="2.7" stroke-linecap="round"/>
<!-- A path -->
<path d="M75.9 597.4V583.2L88.2 593.6M76.4 590.2H83.4" stroke-width="2.7"/>
<path d="M70.4 598.6C69 600.4 69.6 602.8 72 602.4C78 601.4 86 597.8 91.2 595.6C93.6 594.6 95 597 93.8 599.8" stroke-width="2.5"/>
<!-- layers -->
<path d="M81.5 675.6L92.5 681.6L81.5 687.5L70.5 681.6Z" stroke-width="2.8"/>
<path d="M70.4 686.9L81.5 692.8L92.6 686.9M70.4 691.9L81.5 697.7L92.6 691.9" stroke-width="2.7"/>
<!-- lock (bottom) -->
<path d="M18.4 902V898.3a5.1 5.1 0 0 1 10.2 0V902" stroke-width="2.4"/>
<rect x="13.9" y="902.6" width="18.5" height="12.7" rx="1" stroke-width="2.4"/>
</g>
<g fill="#0a7cc6">
<rect x="24.2" y="630.6" width="8.2" height="8.2" rx="1"/>
<path d="M12.75 580.8Q13.6 583.8 16.6 584.6Q13.6 585.4 12.75 588.4Q11.9 585.4 8.9 584.6Q11.9 583.8 12.75 580.8Z"/>
<rect x="31.7" y="585.1" width="3.1" height="19.2"/>
<!-- group squares -->
<path fill-rule="evenodd" d="M71.7 393.1h6.6a2 2 0 0 1 2 2v6.6a2 2 0 0 1 -2 2h-6.6a2 2 0 0 1 -2 -2v-6.6a2 2 0 0 1 2 -2zM72.6 396v4.8h4.8v-4.8z"/>
<rect x="82.5" y="393.1" width="10.5" height="10.6" rx="2"/>
<rect x="69.7" y="405.4" width="10.6" height="10.6" rx="2"/>
<rect x="82.5" y="405.4" width="10.5" height="10.6" rx="2"/>
<!-- mirror -->
<path d="M79.8 441V461.2H69.8z" stroke="#0a7cc6" stroke-width="1.2" stroke-linejoin="round"/>
<rect x="22" y="907.5" width="2.4" height="4.9" rx="1.2"/>
</g>
<path d="M83.9 442.6V460.5H92.9z" fill="none" stroke="#0a7cc6" stroke-width="2.6" stroke-linejoin="round"/>
<!-- gray icons -->
<g fill="#8f8f8f">
<!-- union -->
<path d="M78.7 157.9H91.5a1.5 1.5 0 0 1 1.5 1.5V172.2a1.5 1.5 0 0 1 -1.5 1.5H85.7V179.5a1.5 1.5 0 0 1 -1.5 1.5H71.7a1.5 1.5 0 0 1 -1.5 -1.5V167.1a1.5 1.5 0 0 1 1.5 -1.5H77.2V159.4a1.5 1.5 0 0 1 1.5 -1.5Z"/>
<!-- intersect overlap -->
<rect x="77.2" y="212" width="8.5" height="8.6"/>
<!-- difference -->
<path fill-rule="evenodd" d="M78.7 252.2H91.5a1.5 1.5 0 0 1 1.5 1.5V265.9a1.5 1.5 0 0 1 -1.5 1.5H85.7V273.2a1.5 1.5 0 0 1 -1.5 1.5H71.7a1.5 1.5 0 0 1 -1.5 -1.5V261a1.5 1.5 0 0 1 1.5 -1.5H77.2V253.7a1.5 1.5 0 0 1 1.5 -1.5ZM77.2 259.5V267.4H85.7V259.5Z"/>
<!-- align bars -->
<rect x="76" y="348.7" width="12.8" height="6.6" rx="2"/>
<rect x="76" y="359.4" width="18.1" height="6.7" rx="2"/>
<!-- explode blocks -->
<rect x="68.4" y="641.4" width="12" height="7.6" rx="1.5"/>
<rect x="82.8" y="641.4" width="12" height="7.6" rx="1.5"/>
</g>
<g fill="none" stroke="#8f8f8f" stroke-linecap="round">
<rect x="77.9" y="206.1" width="14.4" height="14.4" stroke-width="1.5"/>
<rect x="70.9" y="212.7" width="14.4" height="14.4" stroke-width="1.5"/>
<path d="M77.3 303.4H72.1a2.6 2.6 0 0 0 -2.6 2.6V316.6a2.6 2.6 0 0 0 2.6 2.6H77.3M86.6 303.4H91.9a2.6 2.6 0 0 1 2.6 2.6V316.6a2.6 2.6 0 0 1 -2.6 2.6H86.6M82 297.1V323.7" stroke-width="2.4" stroke-linecap="round" stroke-linejoin="round"/>
<path d="M72.05 345.2V369" stroke-width="2.7"/>
<path d="M81.7 629.6V636.4M74.6 632L77.4 635.6M88.8 632L86 635.6" stroke-width="2.2"/>
</g>
</svg>
<svg width="1908" height="986" style="left:0;top:0">
<g fill="none" stroke="#0a7cc6" stroke-linecap="butt">
<!-- frame -->
<path d="M304.6 957.4V953H309M323.2 953H327.3V957.4M327.3 968.4V972.7H323.2M309 972.7H304.6V968.4" stroke-width="1.7"/>
<rect x="307.6" y="956.6" width="16.7" height="12.9" stroke-width="2.8"/>
<!-- select objs -->
<path d="M342.4 957.4V953H346.8M360.8 953H365.1V957.4M365.1 968.4V972.7H360.8M346.8 972.7H342.4V968.4" stroke-width="1.7"/>
<!-- magnet -->
<path d="M382.8 963.9L389.4 957.3A7.2 7.2 0 0 1 399.6 967.5L393 974.1" stroke-width="5.8"/>
<path d="M386.6 967.6L384.2 971.3L389 972L386 975.6" stroke-width="2.4" stroke-linecap="round" stroke-linejoin="round"/>
</g>
<g fill="#0a7cc6">
<rect x="345.2" y="956" width="9.7" height="5.7"/>
<path d="M356.8 964.9L360.5 957.8L363.9 964.9Z"/>
<ellipse cx="351.4" cy="968.4" rx="4.4" ry="2.5"/>
<path fill-rule="evenodd" d="M421.3 952.1h17.3a2 2 0 0 1 2 2v17.4a2 2 0 0 1 -2 2h-17.3a2 2 0 0 1 -2 -2v-17.4a2 2 0 0 1 2 -2zM421.8 954.8v4h3.9v-4zM427.8 954.8v4h4.1v-4zM433.9 954.8v4h4.1v-4zM421.8 960.9v4h3.9v-4zM427.8 960.9v4h4.1v-4zM433.9 960.9v4h4.1v-4zM421.8 967v3.9h3.9v-3.9zM427.8 967v3.9h4.1v-3.9zM433.9 967v3.9h4.1v-3.9z"/>
</g>
<!-- check icons -->
<g fill="none" stroke="#52c41a" stroke-width="1.7" stroke-linecap="round" stroke-linejoin="round">
<circle cx="698.2" cy="960.9" r="7.2"/>
<path d="M694 960.6L697.3 963.8L702.4 958.2"/>
<circle cx="1627" cy="962.2" r="7.2"/>
<path d="M1622.8 961.9L1626.1 965.1L1631.2 959.5"/>
</g>
<!-- zoom -/+ -->
<g fill="#8a8a8a">
<rect x="1348.6" y="958.7" width="20.7" height="2.3"/>
<rect x="1442" y="958.7" width="20.3" height="2.3"/>
<rect x="1451" y="949.7" width="2.3" height="20.8"/>
</g>
<!-- spinner -->
<path d="M866.1 59.7L869 56.2L871.9 59.7ZM866.1 71L869 74.3L871.9 71Z" fill="#111"/>
<!-- carets -->
<path d="M1595.7 599.2H1603.3L1599.5 603.3Z M1832.6 599.1H1840.2L1836.4 603.3Z" fill="#111"/>
<!-- eye -->
<g fill="none" stroke="#111" stroke-width="1.6">
<path d="M1867.6 599.6C1870.6 594.8 1874.4 592.9 1878.3 592.9C1882.2 592.9 1886 594.8 1889 599.6C1886 604.4 1882.2 606.3 1878.3 606.3C1874.4 606.3 1870.6 604.4 1867.6 599.6Z"/>
<circle cx="1878.3" cy="599.6" r="3.6"/>
</g>
<!-- sort glyph -->
<g fill="none" stroke="#fff" stroke-width="1.1">
<path d="M1775 566V555.5M1773.4 557.4L1775 555.3M1778.4 555.5V566M1780 564.2L1778.4 566.3"/>
</g>
</svg>
<svg width="1908" height="986" style="left:0;top:0">
<g fill="none" stroke="#000" stroke-width="3.3" stroke-linecap="round" stroke-linejoin="round">
<!-- horns -->
<path d="M664.4 404L666.4 417M683.8 404L681.2 417"/>
<!-- top of head -->
<path d="M659.8 419.4C666 417.4 676 416.8 688.2 419.6"/>
<!-- ears -->
<path d="M659.8 419.4C659.6 413.6 655.6 411.6 652.2 411.8C647.8 412 646 415.6 646.4 419.2C646.8 422 648.6 423.6 650.6 424.4"/>
<path d="M688.2 419.6C689 414.6 692.4 412.8 695.4 413C699.4 413.4 700.4 417 699.8 420.4C699.4 422.6 698 424 696.6 425"/>
<!-- head outline -->
<path d="M650.6 424.4C640 434 634.4 446 634.2 458C634 468 634.4 478 640 484.6C646 491 655 493 666 493.2C682 493.4 698 492 707 485C712.6 480 713.4 470 713 462C712.6 446 706 434 696.6 425"/>
<!-- mouth line -->
<path d="M636 455.4C648 450 660 448 673 448C690 448 702 451 711.6 457"/>
<!-- smile -->
<path d="M637.4 465.6L640.8 463.6C642 474 648 486 665.4 487.4C685 488.6 701 478 706.6 462.4L709 463.6"/>
<!-- neck -->
<path d="M666.4 493.4V513.2M685.6 493V540"/>
<!-- body -->
<path d="M666.4 513.4C660 512.6 653 510.6 646 511.6C639 512.6 634.4 515.6 631.4 519.6" stroke-width="3.6"/>
<path d="M629.6 510.4L631.6 519.6C630.2 524 629.4 529 629.6 533C629.8 536.4 631 537.6 633.4 538.2C646 540.8 664 542.6 685.6 542.6" stroke-width="3.4"/>
</g>
<g fill="#000">
<circle cx="664.4" cy="403.6" r="5.1"/>
<circle cx="683.8" cy="403.6" r="5"/>
<ellipse cx="666.8" cy="435.4" rx="5.6" ry="7.4"/>
<ellipse cx="680.4" cy="435.4" rx="5.7" ry="7.4"/>
<path d="M665.6 496.6C670.6 496.4 675.6 499 675.6 504C675.6 509.6 670.6 512 665.6 511.8Z"/>
<ellipse cx="631.2" cy="506.2" rx="5" ry="4.8"/>
<circle cx="643.6" cy="525.3" r="6.9"/>
<circle cx="669.4" cy="530" r="6.6"/>
<ellipse cx="630.6" cy="530.4" rx="3" ry="4.6"/>
<path d="M632.6 538.4H642V549.6C642 553.4 639.8 555.6 637.3 555.6C634.8 555.6 632.6 553.4 632.6 549.6Z"/>
<path d="M646 541.6H653.6V547.4C653.6 550 651.8 551.2 649.8 551.2C647.8 551.2 646 550 646 547.4Z"/>
<path d="M660 541.4H672.4V550.6C672.4 555 669.2 557.4 666.2 557.4C663.2 557.4 660 555 660 550.6Z"/>
<path d="M672.8 541.4H685V549.8C685 554.2 682 556.4 678.9 556.4C675.8 556.4 672.8 554.2 672.8 549.8Z"/>
</g>
</svg>

</body></html>
